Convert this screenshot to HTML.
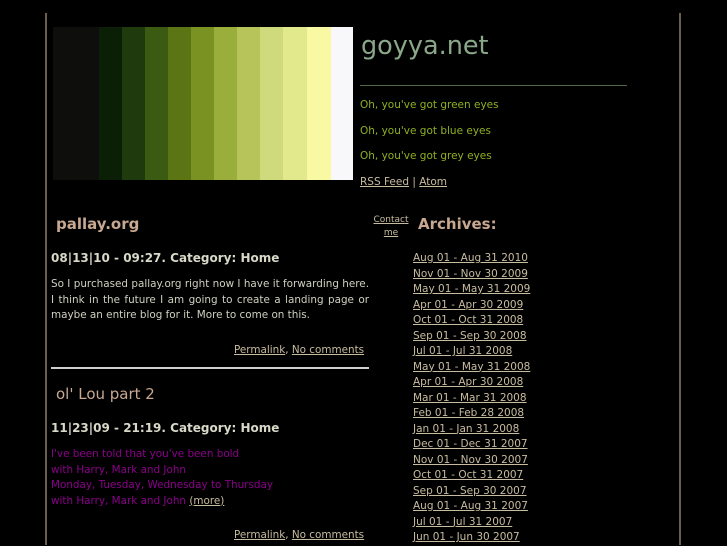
<!DOCTYPE html>
<html><head><style>
body{margin:0;background:#000;width:727px;height:545px;overflow:hidden;position:relative;font-family:"DejaVu Sans","Liberation Sans",sans-serif;font-size:10.5px;}
.vl{position:absolute;top:13px;bottom:0;width:2px;background:#6b5d4f}
a{color:#c8bca0;text-decoration:underline}
.stripes{position:absolute;left:53px;top:27px;height:153px;width:300px;display:flex}
.stripes div{height:100%}
.abs{position:absolute}
.g{color:#8fb021;font-size:10.5px}
.date{font-weight:bold;font-size:12px;color:#d8d8c8}
.body{color:#d0d0c0;text-align:justify;line-height:15.5px;width:318px;font-size:10.4px}
.arch a{display:block;line-height:15.5px;font-size:10.5px}
</style></head><body>
<div class="vl" style="left:45px"></div>
<div class="vl" style="left:679px"></div>
<div class="stripes">
<div style="width:46px;background:#0e0e0c"></div>
<div style="width:23px;background:#0a1f06"></div>
<div style="width:23px;background:#1f3a0c"></div>
<div style="width:23px;background:#3b5a12"></div>
<div style="width:23px;background:#5b7514"></div>
<div style="width:23px;background:#7a9222"></div>
<div style="width:23px;background:#9aae3c"></div>
<div style="width:23px;background:#b6c45a"></div>
<div style="width:23px;background:#cfda7c"></div>
<div style="width:24px;background:#e2e88c"></div>
<div style="width:24px;background:#f9f9a4"></div>
<div style="width:22px;background:#f8f8fa"></div>
</div>
<div class="abs" style="left:361px;top:31px;font-size:25.5px;color:#8aa889">goyya.net</div>
<div class="abs" style="left:360px;top:85px;width:267px;height:1px;background:#4e6a48"></div>
<div class="abs g" style="left:360px;top:99px">Oh, you've got green eyes</div>
<div class="abs g" style="left:360px;top:125px">Oh, you've got blue eyes</div>
<div class="abs g" style="left:360px;top:150px">Oh, you've got grey eyes</div>
<div class="abs" style="left:360px;top:176px;color:#c8bca0"><a>RSS Feed</a> | <a>Atom</a></div>
<div class="abs" style="left:372px;top:214px;font-size:9px;text-align:center;line-height:13px;width:38px"><a>Contact</a><br><a>me</a></div>
<div class="abs" style="left:418px;top:215px;font-size:15px;font-weight:bold;color:#c8a890">Archives:</div>
<div class="abs" style="left:56px;top:215px;font-size:15px;font-weight:bold;color:#c8a890">pallay.org</div>
<div class="abs date" style="left:51px;top:251px">08|13|10 - 09:27. Category: Home</div>
<div class="abs body" style="left:51px;top:277px">So I purchased pallay.org right now I have it forwarding here. I think in the future I am going to create a landing page or maybe an entire blog for it. More to come on this.</div>
<div class="abs" style="left:234px;top:344px;color:#c8bca0;font-size:10.4px"><a>Permalink</a>, <a>No comments</a></div>
<div class="abs" style="left:51px;top:367px;width:318px;height:2px;background:#d0d0d0"></div>
<div class="abs" style="left:56px;top:385px;font-size:15px;color:#c8a890">ol' Lou part 2</div>
<div class="abs date" style="left:51px;top:421px">11|23|09 - 21:19. Category: Home</div>
<div class="abs" style="left:51px;top:447px;color:#8a008a;line-height:15.5px;font-size:10.4px">I've been told that you've been bold<br>with Harry, Mark and John<br>Monday, Tuesday, Wednesday to Thursday<br>with Harry, Mark and John <a>(more)</a></div>
<div class="abs" style="left:234px;top:529px;color:#c8bca0;font-size:10.4px"><a>Permalink</a>, <a>No comments</a></div>
<div class="abs arch" style="left:413px;top:251px">
<a>Aug 01 - Aug 31 2010 </a><a>Nov 01 - Nov 30 2009 </a><a>May 01 - May 31 2009 </a><a>Apr 01 - Apr 30 2009 </a><a>Oct 01 - Oct 31 2008 </a><a>Sep 01 - Sep 30 2008 </a><a>Jul 01 - Jul 31 2008 </a><a>May 01 - May 31 2008 </a><a>Apr 01 - Apr 30 2008 </a><a>Mar 01 - Mar 31 2008 </a><a>Feb 01 - Feb 28 2008 </a><a>Jan 01 - Jan 31 2008 </a><a>Dec 01 - Dec 31 2007 </a><a>Nov 01 - Nov 30 2007 </a><a>Oct 01 - Oct 31 2007 </a><a>Sep 01 - Sep 30 2007 </a><a>Aug 01 - Aug 31 2007 </a><a>Jul 01 - Jul 31 2007 </a><a>Jun 01 - Jun 30 2007 </a>
</div>
</body></html>
